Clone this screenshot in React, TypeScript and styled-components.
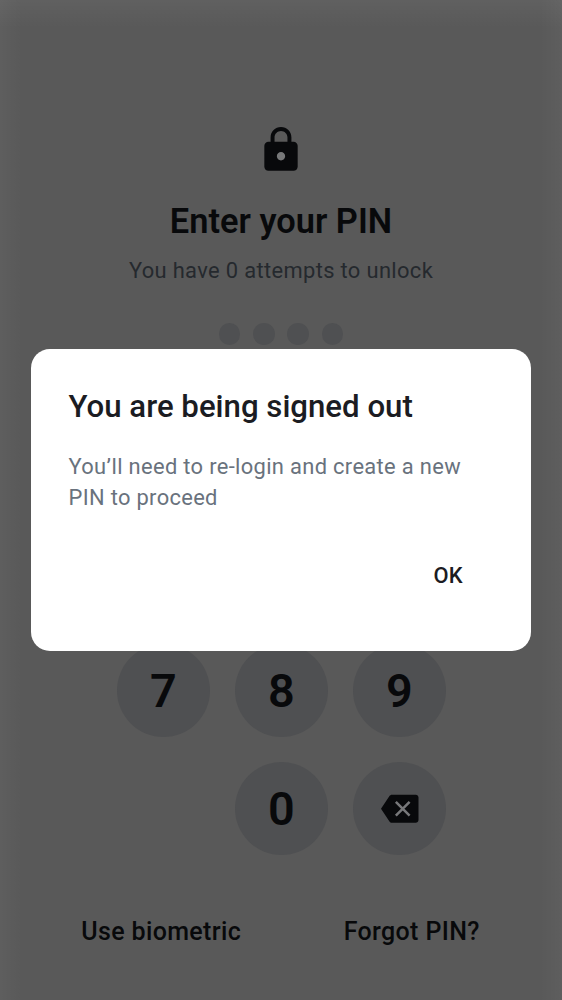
import React from "react";
import styled, { createGlobalStyle } from "styled-components";

const GlobalStyle = createGlobalStyle`
  * { box-sizing: border-box; }
  body { margin: 0; background: #595959; font-family: Roboto, sans-serif; }
  button { font: inherit; border: 0; padding: 0; background: none; color: inherit; }
`;

const ink = "#08090b";
const disc = "#4f5052";

const Screen = styled.main`
  position: relative;
  display: flex;
  flex-direction: column;
  align-items: center;
  width: 562px;
  height: 1000px;
  padding-top: 125px;
  overflow: hidden;
  color: ${ink};
  background:
    linear-gradient(to bottom, rgba(255, 255, 255, 0.045), rgba(255, 255, 255, 0) 28px),
    linear-gradient(to right, rgba(255, 255, 255, 0.03), rgba(255, 255, 255, 0) 22px),
    linear-gradient(to left, rgba(255, 255, 255, 0.03), rgba(255, 255, 255, 0) 22px),
    #595959;
`;

const LockIcon = styled.svg`
  display: block;
  width: 50px;
  height: 50px;
`;

const Heading = styled.h1`
  margin: 25px 0 0;
  font-size: 34.4px;
  line-height: 42px;
  font-weight: 600;
  white-space: nowrap;
`;

const Attempts = styled.p`
  margin: 13px 0 0;
  font-size: 21.9px;
  line-height: 32px;
  letter-spacing: 0.35px;
  color: #25292e;
  white-space: nowrap;
`;

const Dots = styled.div`
  display: flex;
  gap: 12.8px;
  margin-top: 36.4px;
`;

const Dot = styled.span`
  width: 21.6px;
  height: 21.6px;
  border-radius: 50%;
  background: ${disc};
`;

const Keypad = styled.div`
  display: grid;
  grid-template-columns: repeat(3, 93px);
  grid-auto-rows: 93px;
  gap: 25px;
  margin-top: 299.3px;
  padding-left: 0.6px;
`;

const Key = styled.button<{ $column?: number }>`
  display: flex;
  align-items: center;
  justify-content: center;
  grid-column: ${(p) => p.$column ?? "auto"};
  border-radius: 50%;
  background: ${disc};
  font-size: 46.8px;
  font-weight: 600;
`;

const BackspaceIcon = styled.svg`
  width: 37.5px;
  height: 37.5px;
  margin-left: 1px;
`;

const Links = styled.nav`
  display: flex;
  justify-content: space-between;
  width: 398.5px;
  margin-top: 59.3px;
  margin-right: 1px;
`;

const Link = styled.button`
  font-size: 25px;
  line-height: 34px;
  font-weight: 500;
  letter-spacing: 0.36px;
  white-space: nowrap;
`;

const Dialog = styled.section`
  position: absolute;
  top: 349px;
  left: 31px;
  display: flex;
  flex-direction: column;
  width: 500px;
  height: 301.5px;
  padding: 38px 37.5px;
  border-radius: 19px;
  background: #ffffff;
  color: #1b1c22;
`;

const DialogTitle = styled.h2`
  margin: 0;
  font-size: 31.2px;
  line-height: 40px;
  font-weight: 500;
  white-space: nowrap;
`;

const DialogText = styled.p`
  margin: 24px 0 0;
  font-size: 21.9px;
  line-height: 31.2px;
  letter-spacing: 0.33px;
  color: #69727d;
  white-space: nowrap;
`;

const DialogActions = styled.div`
  display: flex;
  justify-content: flex-end;
  margin-top: 47px;
  padding-right: 31px;
`;

const DialogButton = styled.button`
  font-size: 21.9px;
  line-height: 32px;
  font-weight: 500;
`;

export default function App() {
  return (
    <>
      <GlobalStyle />
      <Screen>
        <LockIcon viewBox="0 0 24 24">
          <circle cx="12" cy="15" r="2.4" fill="#777879" />
          <path
            fill={ink}
            fillRule="evenodd"
            d="M18 8h-1V6c0-2.76-2.24-5-5-5S7 3.24 7 6v2H6c-1.1 0-2 .9-2 2v10c0 1.1.9 2 2 2h12c1.1 0 2-.9 2-2V10c0-1.1-.9-2-2-2zm-6 9c-1.1 0-2-.9-2-2s.9-2 2-2 2 .9 2 2-.9 2-2 2zm3.1-9H8.9V6c0-1.71 1.39-3.1 3.1-3.1 1.71 0 3.1 1.39 3.1 3.1v2z"
          />
        </LockIcon>
        <Heading>Enter your PIN</Heading>
        <Attempts>You have 0 attempts to unlock</Attempts>
        <Dots>
          {[0, 1, 2, 3].map((i) => (
            <Dot key={i} />
          ))}
        </Dots>
        <Keypad>
          {[7, 8, 9].map((n) => (
            <Key key={n}>{n}</Key>
          ))}
          <Key $column={2}>0</Key>
          <Key aria-label="Delete">
            <BackspaceIcon viewBox="0 0 24 24">
              <path
                fill={ink}
                d="M22.2 3H7c-.69 0-1.23.35-1.59.88L0 12l5.41 8.11c.36.53.9.89 1.59.89h15.2c1 0 1.8-.8 1.8-1.8V4.8c0-1-.8-1.8-1.8-1.8z"
              />
              <path
                d="M9.5 7.6l8.8 8.8M18.3 7.6l-8.8 8.8"
                fill="none"
                stroke="#77787a"
                strokeWidth="1.6"
              />
            </BackspaceIcon>
          </Key>
        </Keypad>
        <Links>
          <Link>Use biometric</Link>
          <Link>Forgot PIN?</Link>
        </Links>
        <Dialog role="alertdialog">
          <DialogTitle>You are being signed out</DialogTitle>
          <DialogText>
            You’ll need to re-login and create a new
            <br />
            PIN to proceed
          </DialogText>
          <DialogActions>
            <DialogButton>OK</DialogButton>
          </DialogActions>
        </Dialog>
      </Screen>
    </>
  );
}
